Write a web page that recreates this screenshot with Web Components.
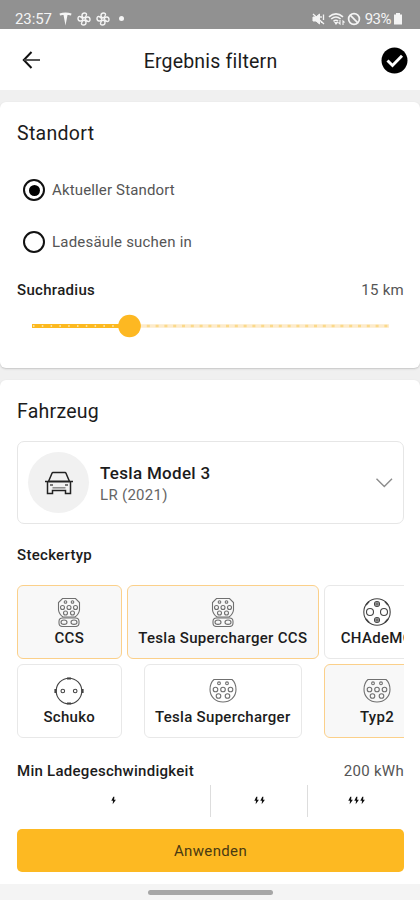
<!DOCTYPE html>
<html lang="de">
<head>
<meta charset="utf-8">
<title>Ergebnis filtern</title>
<style>
	body {
		margin: 0;
		background: #f0f0f0;
		font-family: Roboto, "Noto Sans", sans-serif;
		color: #1c1c1c;
	}
</style>
</head>
<body>
<filter-screen>
	<status-bar slot="top" time="23:57" battery="93%"></status-bar>
	<app-header slot="top">Ergebnis filtern</app-header>

	<filter-card heading="Standort" style="height: 266px; --head-space: 33px; --head-ls: .3px">
		<radio-option checked style="--ls: .15px">Aktueller Standort</radio-option>
		<radio-option style="--ls: .2px">Ladesäule suchen in</radio-option>
		<label-row style="margin-top: -3px; --ls: .3px">Suchradius<span slot="value">15 km</span></label-row>
		<range-slider></range-slider>
	</filter-card>

	<filter-card heading="Fahrzeug" style="height: 540px; --head-space: 17px; --head-ls: .25px">
		<vehicle-select>Tesla Model 3<span slot="detail">LR (2021)</span></vehicle-select>
		<label-row style="margin-top: 20px; --ls: .3px">Steckertyp</label-row>
		<plug-grid>
			<plug-tile kind="ccs" selected>CCS</plug-tile>
			<plug-tile kind="ccs" selected>Tesla Supercharger CCS</plug-tile>
			<plug-tile kind="chademo">CHAdeMO</plug-tile>
			<plug-tile kind="schuko">Schuko</plug-tile>
			<plug-tile kind="type2" style="width: 158px">Tesla Supercharger</plug-tile>
			<plug-tile kind="type2" selected>Typ2</plug-tile>
		</plug-grid>
		<label-row style="margin-top: 23px; --ls: .27px">Min Ladegeschwindigkeit<span slot="value">200 kWh</span></label-row>
		<speed-scale></speed-scale>
	</filter-card>

	<apply-button slot="bottom">Anwenden</apply-button>
	<nav-handle slot="bottom"></nav-handle>
</filter-screen>

<script>
// small base class, each element only brings its own markup
class BaseElement extends HTMLElement {
	constructor() {
		super();
		const template = document.createElement("template");
		template.innerHTML = this.constructor.markup;
		this.attachShadow({ mode: "open" }).append(template.content.cloneNode(true));
	}
}

class FilterScreen extends BaseElement {
	static markup = `
		<style>
			:host { display: flex; flex-direction: column; height: 900px; overflow: hidden; }
			main { flex: 1; min-height: 0; overflow: hidden; display: flex; flex-direction: column; gap: 12px; padding-top: 12px; }
			footer { flex: none; background: #fff; }
		</style>
		<header><slot name="top"></slot></header>
		<main><slot></slot></main>
		<footer><slot name="bottom"></slot></footer>
	`;
}

class StatusBar extends BaseElement {
	static markup = `
		<style>
			:host { display: flex; align-items: center; height: 29px; padding: 8px 17px 0 15px; box-sizing: border-box; background: #919191; color: #f4f4f4; font-size: 15px; line-height: 20px; }
			svg { display: block; fill: none; stroke: #f4f4f4; }
			.time { width: 37px; margin-right: 7px; letter-spacing: -.1px; }
			.fan { margin-left: 5px; }
			.dot { width: 5px; height: 5px; border-radius: 50%; background: #f4f4f4; margin-left: 9px; }
			.right { display: flex; align-items: center; margin-left: auto; }
			.right span { font-size: 15px; letter-spacing: -.5px; margin: 1px 2px 0 4px; }
		</style>
		<span class="time"></span>
		<svg width="13" height="14" viewBox="0 0 13 14"><path d="M.5 1.500Q6.500 -.5 12.500 1.500L12 3.500Q10 2.700 8.500 3L6.500 13.500 4.500 3Q3 2.700 1 3.500Z" fill="#f4f4f4" stroke="none"/></svg>
		<svg class="fan" width="14" height="14" viewBox="0 0 14 14"><path d="M7 6C4 5 4.500 1 7.500 1S10 4 7 6M8 7C9 4 13 4.500 13 7.500S10 10 8 7M7 8C10 9 9.500 13 6.500 13S4 10 7 8M6 7C5 10 1 9.500 1 6.500S4 4 6 7" stroke-width="1.400"/></svg>
		<svg class="fan" width="14" height="14" viewBox="0 0 14 14"><path d="M7 6C4 5 4.500 1 7.500 1S10 4 7 6M8 7C9 4 13 4.500 13 7.500S10 10 8 7M7 8C10 9 9.500 13 6.500 13S4 10 7 8M6 7C5 10 1 9.500 1 6.500S4 4 6 7" stroke-width="1.400"/></svg>
		<i class="dot"></i>
		<div class="right">
			<svg width="14" height="14" viewBox="0 0 14 14"><path d="M1 5H4L7.500 2V12L4 9H1Z" fill="#f4f4f4"/><path d="M1 2L12 12M9 4V6M9.500 9V11M11.500 2.500V8" stroke-width="1.300"/></svg>
			<svg width="18" height="14" viewBox="0 0 18 14" style="margin-left: 2px"><path d="M1 4.800Q8 -1 15 4.800M3.200 7Q8 3 12.600 7M5.500 9.300Q8 7.200 10 9.300" stroke-width="1.600"/><path d="M7 10.500L8 12 9.300 10.500ZM12 8V12L10.500 10.500M15 13V9L16.500 10.500" stroke-width="1.100"/></svg>
			<svg width="14" height="14" viewBox="0 0 14 14" style="margin-left: 1px"><circle cx="7" cy="7" r="5.400" stroke-width="1.700"/><path d="M3.200 3.200L10.800 10.800" stroke-width="1.700"/></svg>
			<span></span>
			<svg width="10" height="13" viewBox="0 0 10 13"><path d="M1 2.500H3V1H7V2.500H9V12.500H1Z" fill="#f4f4f4" stroke="none"/></svg>
		</div>
	`;
	connectedCallback() {
		this.shadowRoot.querySelector(".time").textContent = this.getAttribute("time");
		this.shadowRoot.querySelector(".right span").textContent = this.getAttribute("battery");
	}
}

class AppHeader extends BaseElement {
	static markup = `
		<style>
			:host { display: grid; grid-template-columns: 27px 1fr 27px; align-items: center; height: 61px; padding: 1px 12px 0 18px; box-sizing: border-box; background: #fff; }
			h1 { margin: 3px 0 0; font-size: 19.500px; font-weight: 400; line-height: 24px; letter-spacing: .2px; text-align: center; padding-right: 5px; }
			svg { display: block; }
		</style>
		<svg width="27" height="24" viewBox="0 0 27 24"><path d="M13.500 4L5.800 12 13.500 20" fill="none" stroke="#111" stroke-width="2"/><path d="M6 12H22" stroke="#444" stroke-width="1.800"/></svg>
		<h1><slot></slot></h1>
		<svg width="27" height="27" viewBox="0 0 27 27"><circle cx="13.500" cy="13.500" r="13" fill="#000"/><path d="M6.500 13.500L11.500 18.500 21 8.700" fill="none" stroke="#fff" stroke-width="2.900"/></svg>
	`;
}

class FilterCard extends BaseElement {
	static markup = `
		<style>
			:host { display: block; flex: none; box-sizing: border-box; padding: 20px 16px 0 17px; border-radius: 6px; background: #fff; box-shadow: 0 1px 2px #c4c4c4; }
			h2 { margin: 0 0 var(--head-space); font-size: 19.500px; font-weight: 400; line-height: 24px; letter-spacing: var(--head-ls); }
		</style>
		<h2></h2>
		<slot></slot>
	`;
	connectedCallback() {
		this.shadowRoot.querySelector("h2").textContent = this.getAttribute("heading");
	}
}

class RadioOption extends BaseElement {
	static markup = `
		<style>
			:host { display: flex; align-items: center; height: 22px; margin: 0 0 30px 6px; font-size: 15px; color: #555; letter-spacing: var(--ls); }
			i { box-sizing: border-box; width: 22px; height: 22px; border: 2px solid #111; border-radius: 50%; margin-right: 7px; padding: 3.500px; background: #fff content-box; }
			:host([checked]) i { background-color: #000; }
		</style>
		<i></i><slot></slot>
	`;
}

class LabelRow extends BaseElement {
	static markup = `
		<style>
			:host { display: flex; justify-content: space-between; height: 20px; line-height: 20px; font-size: 15px; font-weight: 500; letter-spacing: var(--ls); }
			::slotted(span) { font-weight: 400; color: #555; letter-spacing: .3px; }
		</style>
		<b style="font-weight: inherit"><slot></slot></b><slot name="value"></slot>
	`;
}

class RangeSlider extends BaseElement {
	static markup = `
		<style>
			:host { display: block; margin: 14px 0 0; }
			svg { display: block; }
		</style>
		<svg width="387" height="24" viewBox="0 0 387 24">
			<path d="M112 12H372" stroke="#fdebcb" stroke-width="3.600"/>
			<path d="M121 12H372" stroke="#fbd98a" stroke-width="2.600" stroke-dasharray="3 5.800"/>
			<path d="M15 12H112" stroke="#fcb920" stroke-width="4.200"/>
			<path d="M16 12H104" stroke="#fddf98" stroke-width="2" stroke-dasharray="1.500 7.300"/>
			<circle cx="112.500" cy="12" r="11.300" fill="#fdb822"/>
		</svg>
	`;
}

class VehicleSelect extends BaseElement {
	static markup = `
		<style>
			:host { display: flex; align-items: center; box-sizing: border-box; height: 83px; margin-bottom: 21px; padding: 0 10px 0 10px; border: 1.500px solid #e6e6e6; border-radius: 7px; }
			.badge { display: grid; place-items: center; width: 61px; height: 61px; border-radius: 50%; background: #f1f1f1; margin-right: 11px; }
			.text { padding-top: 2px; }
			.name { font-size: 17px; font-weight: 500; line-height: 22px; letter-spacing: .3px; }
			.detail { font-size: 15px; line-height: 22px; color: #666; letter-spacing: .3px; }
			.chevron { margin-left: auto; }
		</style>
		<div class="badge">
			<svg width="30" height="26" viewBox="0 0 30 26" fill="none" stroke="#222" stroke-width="1.500">
				<path d="M1 11.500H4.500L8 3.200Q8.300 2.500 9 2.500H21Q21.700 2.500 22 3.200L25.500 11.500H29"/>
				<path d="M4.500 11.500H25.500" stroke-width="2"/>
				<path d="M3.500 12V23.500H8.500V20.500H21.500V23.500H26.500V12"/>
				<path d="M8.500 17.800H21.500" stroke="#888"/>
				<path d="M6 15H9M21 15H24" stroke="#777" stroke-width="2"/>
			</svg>
		</div>
		<div class="text">
			<div class="name"><slot></slot></div>
			<div class="detail"><slot name="detail"></slot></div>
		</div>
		<svg class="chevron" width="18" height="12" viewBox="0 0 18 12"><path d="M1.500 1.800L9.300 9.600 17 1.800" fill="none" stroke="#8c8c8c" stroke-width="1.400"/></svg>
	`;
}

class PlugGrid extends BaseElement {
	static markup = `
		<style>
			:host { display: grid; grid-template-columns: 104.500px 191.500px 106px; gap: 5px 5.500px; justify-items: center; margin: 20px 0 0; overflow: hidden; }
		</style>
		<slot></slot>
	`;
}

const dot = (x, y, r = 2.300) => `<circle cx="${x}" cy="${y}" r="${r}"/>`;
const plugs = {
	ccs: `<path d="M8.500 1.500H21.500L25.500 5.500V13Q25 17 21 20H9Q5 17 4.500 13V5.500Z"/>
		${dot(11.500, 5, 1.3)}${dot(18.500, 5, 1.3)}${dot(8.500, 10.500, 2)}${dot(15, 10.500, 2)}${dot(21.500, 10.500, 2)}${dot(11.500, 16, 2)}${dot(18.500, 16, 2)}
		<rect x="5" y="21" width="20" height="8.500" rx="3.500"/><ellipse cx="10" cy="25.200" rx="3" ry="2.200"/><ellipse cx="20" cy="25.200" rx="3" ry="2.200"/>`,
	type2: `<path d="M6 3.500H24Q28 7 28 13.500C28 21 22 26 15 26S2 21 2 13.500Q2 7 6 3.500Z"/>
		${dot(11, 7.300, 1.4)}${dot(19, 7.300, 1.4)}${dot(7.500, 13.500)}${dot(15, 13.500)}${dot(22.500, 13.500)}${dot(10.500, 20)}${dot(19.500, 20)}`,
	chademo: `${dot(15, 15, 13.2)}${dot(8, 15, 3.500)}${dot(22, 15, 3.500)}${dot(15, 7, 2.500)}${dot(15, 23, 2.500)}
		<path d="M13 7H17M15 5V9M13 23H17M15 21V25" stroke-width="1"/><path d="M4 8L7 4.500M23 4.500L26 8M4 22L7 25.500M23 25.500L26 22" stroke-width="1.600"/>`,
	schuko: `${dot(15, 15, 12.8)}${dot(8.800, 15, 1.800)}${dot(21.200, 15, 1.800)}
		<path d="M1.500 13V17M28.500 13V17M13 2.500H17M13 27.500H17" stroke-width="2.200"/>`
};

class PlugTile extends BaseElement {
	static markup = `
		<style>
			:host { display: flex; flex-direction: column; align-items: center; width: 100%; height: 74px; box-sizing: border-box; border: 1.500px solid #e8e8e8; border-radius: 6px; padding-top: 11px; font-size: 15px; font-weight: 500; line-height: 20px; letter-spacing: .3px; white-space: nowrap; }
			:host([selected]) { border-color: #fbd08a; background: #f8f8f8; }
			svg { flex: none; display: block; margin-bottom: 1px; }
		</style>
		<svg width="30" height="30" viewBox="0 0 30 30" fill="none" stroke="#707070" stroke-width="1.100"></svg>
		<slot></slot>
	`;
	connectedCallback() {
		const kind = this.getAttribute("kind");
		const svg = this.shadowRoot.querySelector("svg");
		svg.innerHTML = plugs[kind];
		if (kind === "schuko" || kind === "chademo") svg.setAttribute("stroke", "#444");
	}
}

class SpeedScale extends BaseElement {
	static markup = `
		<style>
			:host { display: grid; grid-template-columns: 193px 97px 97px; height: 32px; margin-top: 4px; }
			div { display: flex; justify-content: center; align-items: center; gap: 1px; padding-bottom: 1px; }
			div + div { border-left: 1px solid #ddd; }
			svg { display: block; }
		</style>
	`;
	connectedCallback() {
		const bolt = `<svg width="5" height="9" viewBox="0 0 5 9"><path d="M2.300 .8L.3 4.800H2L1.700 8.300 4.900 3.700H3.100L3.400 .8Z" fill="#111"/></svg>`;
		for (const count of [1, 2, 3]) {
			const step = document.createElement("div");
			step.innerHTML = bolt.repeat(count);
			this.shadowRoot.append(step);
		}
	}
}

class ApplyButton extends BaseElement {
	static markup = `
		<style>
			:host { display: block; padding: 12px 16px 12px 17px; }
			button { display: block; width: 100%; height: 43px; border: 0; border-radius: 5px; padding: 1px 0 0; background: #fdb922; color: #4a3a12; font: 15px Roboto, sans-serif; letter-spacing: .35px; }
		</style>
		<button><slot></slot></button>
	`;
}

class NavHandle extends BaseElement {
	static markup = `
		<style>
			:host { display: flex; justify-content: center; height: 16px; padding-top: 6px; box-sizing: border-box; background: #f4f4f4; }
			i { width: 125px; height: 5px; border-radius: 3px; background: #a6a6a6; }
		</style>
		<i></i>
	`;
}

customElements.define("filter-screen", FilterScreen);
customElements.define("status-bar", StatusBar);
customElements.define("app-header", AppHeader);
customElements.define("filter-card", FilterCard);
customElements.define("radio-option", RadioOption);
customElements.define("label-row", LabelRow);
customElements.define("range-slider", RangeSlider);
customElements.define("vehicle-select", VehicleSelect);
customElements.define("plug-grid", PlugGrid);
customElements.define("plug-tile", PlugTile);
customElements.define("speed-scale", SpeedScale);
customElements.define("apply-button", ApplyButton);
customElements.define("nav-handle", NavHandle);
</script>
</body>
</html>
